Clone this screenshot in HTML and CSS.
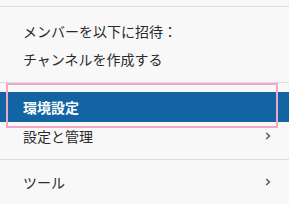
FILE: index.html
```html
<!DOCTYPE html>
<html>
<head>
    <meta charset="UTF-8">
    <link rel="stylesheet" href="styles.css">
</head>
<body>
    <div class="menu">
        <div class="sep"></div>
        <div class="group first">
            <div class="item">メンバーを以下に招待：</div>
            <div class="item">チャンネルを作成する</div>
        </div>
        <div class="sep"></div>
        <div class="group">
            <div class="item selected">環境設定</div>
            <div class="item">設定と管理
                <svg class="chev" width="6" height="8" viewBox="0 0 6 8"><path d="M1.2 1 L4.4 4 L1.2 7" fill="none" stroke="#616061" stroke-width="1.6"/></svg>
            </div>
        </div>
        <div class="sep"></div>
        <div class="group last">
            <div class="item">ツール
                <svg class="chev" width="6" height="8" viewBox="0 0 6 8"><path d="M1.2 1 L4.4 4 L1.2 7" fill="none" stroke="#616061" stroke-width="1.6"/></svg>
            </div>
        </div>
        <div class="mark"></div>
    </div>
</body>
</html>
```

FILE: styles.css
```css
body {
    margin: 0;
    background: #f8f8f8;
    font-family: "Noto Sans CJK JP", "Noto Sans", sans-serif;
    font-size: 14px;
    color: #2b2a2b;
}

.menu {
    position: relative;
    padding-top: 6px;
}

.sep {
    height: 1px;
    background: #dddddd;
}

.group {
    padding: 9px 0 9px;
}

.group.first {
    padding: 10px 0 9px;
}

.group.last {
    padding-top: 8px;
}

.item {
    display: flex;
    align-items: center;
    justify-content: space-between;
    height: 28px;
    padding: 0 18px 0 23px;
}

.item.selected {
    height: 30px;
    background: #1264a3;
    color: #ffffff;
    font-weight: bold;
}

.mark {
    position: absolute;
    left: 6px;
    top: 83px;
    width: 268px;
    height: 41px;
    border: 2px solid #f3a7c8;
}
```
